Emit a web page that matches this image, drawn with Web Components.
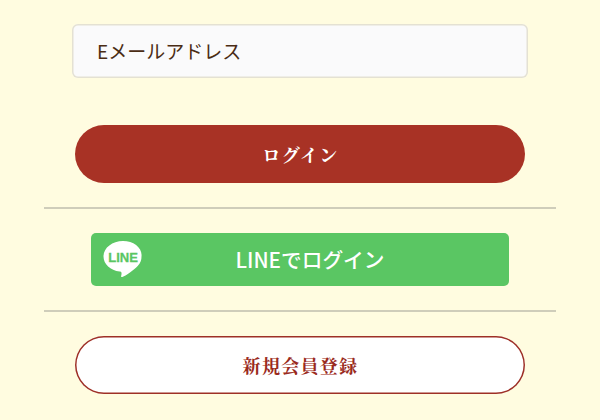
<!DOCTYPE html>
<html lang="ja">
<head>
<meta charset="utf-8">
<title>ログイン</title>
<style>
    html, body { margin: 0; background: #fffce0; }
    body { font-family: "Noto Sans CJK JP", sans-serif; }
</style>
</head>
<body>
<login-panel>
    <text-field placeholder="Eメールアドレス"></text-field>
    <pill-button kind="primary">ログイン</pill-button>
    <line-rule></line-rule>
    <line-button>LINEでログイン</line-button>
    <line-rule></line-rule>
    <pill-button kind="outline">新規会員登録</pill-button>
</login-panel>

<script>
class LoginPanel extends HTMLElement {
    constructor() {
        super();
        this.attachShadow({ mode: 'open' });
        this.shadowRoot.innerHTML = `
            <style>
                :host {
                    display: flex;
                    flex-direction: column;
                    align-items: center;
                    width: 600px;
                    height: 420px;
                    padding-top: 24px;
                    box-sizing: border-box;
                    overflow: hidden;
                }
            </style>
            <slot></slot>
        `;
    }
}

class TextField extends HTMLElement {
    constructor() {
        super();
        this.attachShadow({ mode: 'open' });
        this.shadowRoot.innerHTML = `
            <style>
                :host {
                    display: flex;
                    align-items: center;
                    width: 456px;
                    height: 54px;
                    padding: 0 0 2px 25px;
                    margin-bottom: 47px;
                    box-sizing: border-box;
                    background: #fafafb;
                    box-shadow: inset 0 0 0 1.5px #e4e1d3;
                    border-radius: 6px;
                    color: #4a2c14;
                    font-family: "Noto Sans CJK JP", sans-serif;
                    font-size: 19px;
                }
            </style>
            <span id="text"></span>
        `;
        this.shadowRoot.querySelector('#text').textContent = this.getAttribute('placeholder');
    }
}

class PillButton extends HTMLElement {
    constructor() {
        super();
        this.attachShadow({ mode: 'open' });
        this.shadowRoot.innerHTML = `
            <style>
                :host {
                    display: flex;
                    align-items: center;
                    justify-content: center;
                    width: 450px;
                    height: 58px;
                    padding-left: 1px;
                    box-sizing: border-box;
                    border-radius: 29px;
                    font-family: "Noto Serif CJK JP", "Noto Sans CJK JP", serif;
                    font-size: 18px;
                    font-weight: 700;
                    letter-spacing: 1.3px;
                }
                :host([kind=primary]) {
                    background: #a83225;
                    color: #fff;
                }
                :host([kind=outline]) {
                    background: #fff;
                    color: #9a2a20;
                    box-shadow: inset 0 0 0 1.5px #9e3026;
                }
            </style>
            <slot></slot>
        `;
    }
}

class LineRule extends HTMLElement {
    constructor() {
        super();
        this.attachShadow({ mode: 'open' });
        this.shadowRoot.innerHTML = `
            <style>
                :host {
                    display: block;
                    width: 512px;
                    height: 1.5px;
                    margin: 24px 0 24.5px;
                    background: #cfcdba;
                }
            </style>
        `;
    }
}

class LineButton extends HTMLElement {
    constructor() {
        super();
        this.attachShadow({ mode: 'open' });
        this.shadowRoot.innerHTML = `
            <style>
                :host {
                    display: flex;
                    align-items: center;
                    justify-content: center;
                    position: relative;
                    width: 418px;
                    height: 53px;
                    padding-left: 20px;
                    padding-bottom: 1px;
                    box-sizing: border-box;
                    border-radius: 5px;
                    background: #5ac663;
                    color: #fff;
                    font-family: "Noto Sans CJK JP", sans-serif;
                    font-size: 20.7px;
                    font-weight: 500;
                }
                svg {
                    position: absolute;
                    left: 12px;
                    top: 7px;
                }
            </style>
            <svg width="40" height="38" viewBox="0 0 40 38">
                <path fill="#fff" d="M20 1C9.200 1 .5 7.900.5 16.400c0 7.600 6.900 13.900 16.200 15.200.6.100 1.500.4 1.700.9.200.5.100 1.200.100 1.700l-.3 1.600c-.1.500-.4 1.900 1.700 1 2-.8 11-6.500 15-11.100 2.800-3 3.600-6.100 3.600-9.300C39.500 7.900 30.800 1 20 1z"/>
                <text x="20" y="21.500" text-anchor="middle" fill="#5ac663" stroke="#5ac663" stroke-width=".3" font-family="Liberation Sans, sans-serif" font-size="13" font-weight="700">LINE</text>
            </svg>
            <slot></slot>
        `;
    }
}

customElements.define('login-panel', LoginPanel);
customElements.define('text-field', TextField);
customElements.define('pill-button', PillButton);
customElements.define('line-rule', LineRule);
customElements.define('line-button', LineButton);
</script>
</body>
</html>
